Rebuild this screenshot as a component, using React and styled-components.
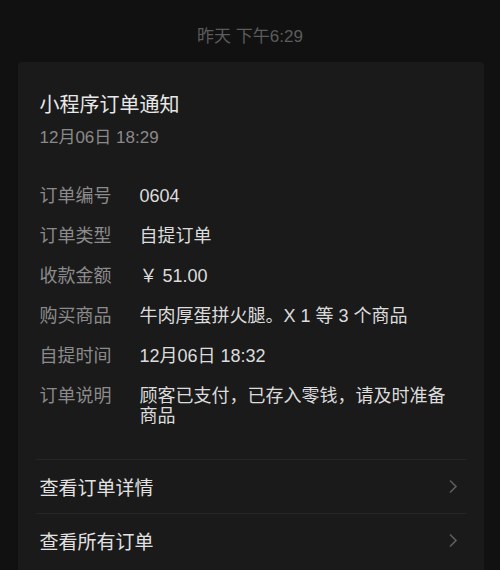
import React from "react";
import styled, { createGlobalStyle } from "styled-components";

const GlobalStyle = createGlobalStyle`
  html, body {
    margin: 0;
    padding: 0;
    background: #111111;
  }
  body {
    font-family: "Liberation Sans", "Noto Sans CJK SC", sans-serif;
  }
`;

const Page = styled.div`
  width: 500px;
  height: 570px;
  overflow: hidden;
  display: flex;
  flex-direction: column;
  align-items: center;
  background: #111111;
`;

const Stamp = styled.div`
  margin-top: 25px;
  height: 24px;
  line-height: 24px;
  font-size: 17px;
  color: #5c5c5c;
`;

const Card = styled.div`
  margin-top: 13px;
  width: 466px;
  margin-left: 1px;
  flex: 1;
  background: #1a1a1a;
  border-radius: 4px 4px 0 0;
  padding: 29px 18px 0 22px;
  box-sizing: border-box;
`;

const Title = styled.div`
  font-size: 20px;
  line-height: 28px;
  color: #e8e8e8;
`;

const SubTime = styled.div`
  margin-top: 7px;
  font-size: 17px;
  line-height: 24px;
  color: #8a8a8a;
`;

const Fields = styled.div`
  margin-top: 34px;
  display: flex;
  flex-direction: column;
  gap: 16px;
`;

const Row = styled.div`
  display: flex;
  font-size: 18px;
  line-height: 24px;
`;

const Label = styled.div`
  width: 100px;
  flex-shrink: 0;
  color: #8b8b8b;
`;

const Value = styled.div`
  width: 316px;
  color: #dcdcdc;
  line-height: ${(p) => (p.$multi ? "20px" : "24px")};
  padding-top: ${(p) => (p.$multi ? "2px" : "0")};
`;

const Links = styled.div`
  margin-top: 33px;
`;

const LinkRow = styled.div`
  height: 54px;
  display: flex;
  align-items: center;
  justify-content: space-between;
  border-top: 1px solid #262626;
  margin-left: -4px;
  padding-left: 4px;
  padding-right: 8px;
  font-size: 19px;
  color: #e2e2e2;
  box-sizing: border-box;
`;

const Chevron = () => (
  <svg width="10" height="15" viewBox="0 0 10 15">
    <path d="M2 1.5 L8 7.5 L2 13.5" fill="none" stroke="#5e5e5e" strokeWidth="1.6" />
  </svg>
);

const fields = [
  ["订单编号", "0604"],
  ["订单类型", "自提订单"],
  ["收款金额", "￥ 51.00"],
  ["购买商品", "牛肉厚蛋拼火腿。X 1 等 3 个商品"],
  ["自提时间", "12月06日 18:32"],
  ["订单说明", "顾客已支付，已存入零钱，请及时准备商品", true],
];

export default function App() {
  return (
    <Page>
      <GlobalStyle />
      <Stamp>昨天 下午6:29</Stamp>
      <Card>
        <Title>小程序订单通知</Title>
        <SubTime>12月06日 18:29</SubTime>
        <Fields>
          {fields.map(([k, v, multi]) => (
            <Row key={k}>
              <Label>{k}</Label>
              <Value $multi={multi}>{v}</Value>
            </Row>
          ))}
        </Fields>
        <Links>
          <LinkRow>
            查看订单详情
            <Chevron />
          </LinkRow>
          <LinkRow>
            查看所有订单
            <Chevron />
          </LinkRow>
        </Links>
      </Card>
    </Page>
  );
}
